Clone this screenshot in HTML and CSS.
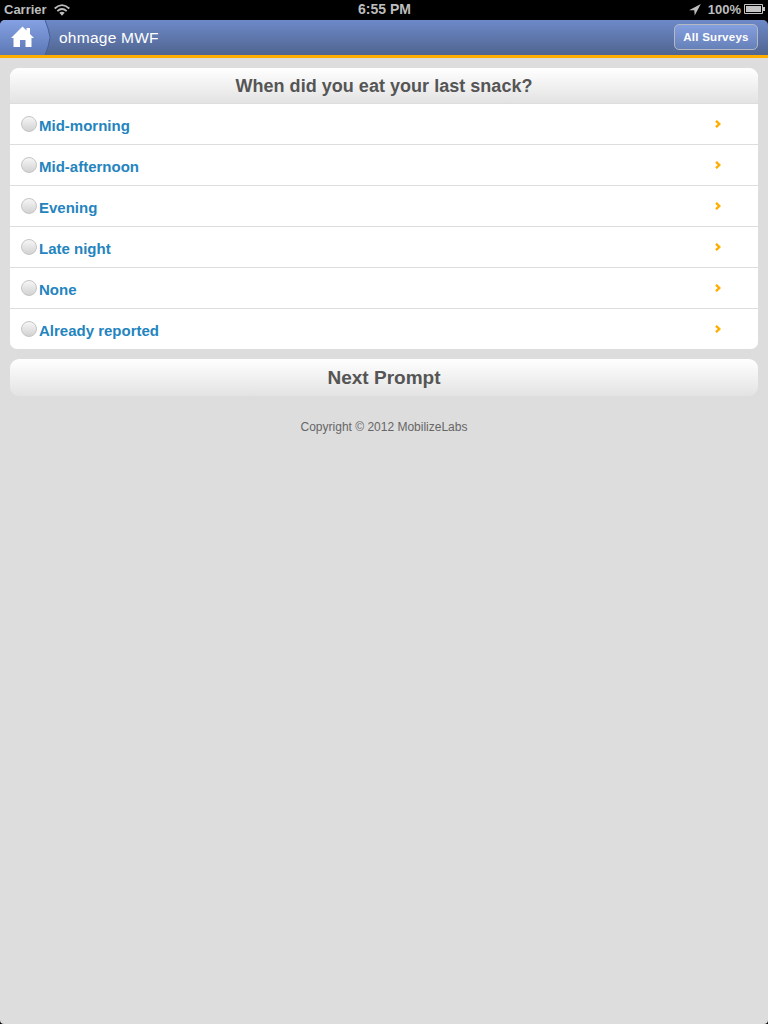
FILE: index.html
```html
<!DOCTYPE html>
<html lang="en">
<head>
<meta charset="utf-8">
<title>ohmage MWF</title>
<link rel="stylesheet" href="styles.css">
</head>
<body>
<div class="status">
  <div class="status-left"><span>Carrier</span>
    <svg class="wifi" width="16" height="12" viewBox="0 0 16 12" fill="none" stroke="#bdbdbd" stroke-width="1.8"><path d="M.7 4.5Q8-2.3 15.300 4.500M3.300 7.100Q8 2.900 12.700 7.100"/><path d="M5.300 8.800Q8 6.500 10.700 8.800L8 11.700Z" fill="#bdbdbd" stroke="none"/></svg>
  </div>
  <div class="status-time">6:55 PM</div>
  <div class="status-right">
    <svg class="location" width="12" height="12" viewBox="0 0 12 12"><path d="M11.800 0L0 6.300h5.300L5.700 11.500z" fill="#bdbdbd"/></svg>
    <span>100%</span>
    <svg class="battery" width="21" height="10" viewBox="0 0 21 10"><path d="M.5.500h18v9H.5z" fill="none" stroke="#c4c4c4"/><path d="M2 2h15v6H2zM19 3h2v4h-2z" fill="#c4c4c4"/></svg>
  </div>
</div>
<header class="header">
  <a class="home">
    <svg width="51" height="35" viewBox="0 0 51 35">
      <defs><linearGradient id="tab" x2="0" y2="1"><stop stop-color="#86a1e3"/><stop offset="1" stop-color="#5d78b5"/></linearGradient></defs>
      <path d="M0 0H45L50 17.500L45 35H0Z" fill="url(#tab)"/>
      <path d="M45 0Q49 9 50 17.500Q49 27 45 35" fill="none" stroke="#48609b"/>
      <path d="M22.500 6.500L26.500 10.500V8H30V14L34 18H31.500V27H25.500V20H20V27H13.500V18H11Z" fill="#fff"/>
    </svg>
  </a>
  <div class="title">ohmage MWF</div>
  <a class="all">All Surveys</a>
</header>
<main class="content">
  <section class="card">
    <h1 class="question">When did you eat your last snack?</h1>
    <div class="row"><i class="radio"></i><span class="label">Mid-morning</span><svg class="arrow" width="6" height="8" viewBox="0 0 6 8"><path d="M1 .8L4.300 4L1 7.200"/></svg></div>
    <div class="row"><i class="radio"></i><span class="label">Mid-afternoon</span><svg class="arrow" width="6" height="8" viewBox="0 0 6 8"><path d="M1 .8L4.300 4L1 7.200"/></svg></div>
    <div class="row"><i class="radio"></i><span class="label">Evening</span><svg class="arrow" width="6" height="8" viewBox="0 0 6 8"><path d="M1 .8L4.300 4L1 7.200"/></svg></div>
    <div class="row"><i class="radio"></i><span class="label">Late night</span><svg class="arrow" width="6" height="8" viewBox="0 0 6 8"><path d="M1 .8L4.300 4L1 7.200"/></svg></div>
    <div class="row"><i class="radio"></i><span class="label">None</span><svg class="arrow" width="6" height="8" viewBox="0 0 6 8"><path d="M1 .8L4.300 4L1 7.200"/></svg></div>
    <div class="row"><i class="radio"></i><span class="label">Already reported</span><svg class="arrow" width="6" height="8" viewBox="0 0 6 8"><path d="M1 .8L4.300 4L1 7.200"/></svg></div>
  </section>
  <a class="next">Next Prompt</a>
  <footer class="footer">Copyright © 2012 MobilizeLabs</footer>
</main>
</body>
</html>
```
FILE: styles.css
```css
* { box-sizing: border-box; }
html { background: #000; }
body {
  margin: 0;
  height: 1024px;
  display: flex;
  flex-direction: column;
  background: #000;
  font-family: "Liberation Sans", Arial, sans-serif;
  overflow: hidden;
}
svg { display: block; flex: none; }
.status {
  height: 20px;
  flex: none;
  display: grid;
  grid-template-columns: 1fr auto 1fr;
  padding: 0 3px 0 4px;
  color: #bdbdbd;
  font-size: 13px;
  font-weight: bold;
  line-height: 19px;
}
.status-left, .status-right { display: flex; }
.status-right { justify-content: flex-end; }
.status-time { font-size: 14px; }
.wifi { margin: 4px 0 0 7px; }
.location { margin: 4px 7px 0 0; }
.battery { margin: 4px 0 0 3px; }
.header {
  height: 38px;
  flex: none;
  display: flex;
  border-bottom: 3px solid #ffae00;
  border-radius: 5px 5px 0 0;
  background: linear-gradient(#6d89c9, #50658f);
  overflow: hidden;
}
.title {
  flex: 1;
  padding-left: 8px;
  color: #fff;
  font-size: 15.5px;
  line-height: 35px;
  letter-spacing: .25px;
}
.all {
  width: 84px;
  height: 26px;
  margin: 4px 10px 0 0;
  border: 1px solid #b5b8c0;
  border-radius: 5px;
  background: linear-gradient(#849fdf, #6680b8);
  color: #fff;
  font-size: 11.5px;
  font-weight: bold;
  line-height: 25px;
  text-align: center;
  letter-spacing: .25px;
}
.content {
  flex: 1;
  padding: 10px;
  background: #ddd;
  border-radius: 0 0 4px 4px;
}
.card { border-radius: 9px 9px 7px 7px; background: #fff; overflow: hidden; }
.question {
  height: 35px;
  margin: 0;
  background: linear-gradient(#fff, #e3e3e3);
  color: #555;
  font-size: 18px;
  line-height: 36px;
  letter-spacing: .03px;
  text-align: center;
}
.row {
  height: 41px;
  display: flex;
  align-items: flex-start;
  border-top: 1px solid #ddd;
  padding: 12px 37px 0 11px;
}
.radio {
  width: 16px;
  height: 16px;
  border: 1px solid #c5c5c5;
  border-radius: 50%;
  background: linear-gradient(#f6f6f6, #d2d2d2);
}
.label {
  flex: 1;
  padding: 1px 0 0 2px;
  color: #2484be;
  font-size: 15px;
  font-weight: bold;
  line-height: 18px;
}
.arrow { margin-top: 4px; fill: none; stroke: #ffae00; stroke-width: 2.4; }
.next {
  display: block;
  height: 37px;
  margin-top: 10px;
  border-radius: 9px;
  background: linear-gradient(#fff, #e3e3e3);
  color: #555;
  font-size: 19px;
  font-weight: bold;
  line-height: 37px;
  text-align: center;
}
.footer {
  margin-top: 23px;
  color: #666;
  font-size: 12px;
  line-height: 16px;
  text-align: center;
}
```
